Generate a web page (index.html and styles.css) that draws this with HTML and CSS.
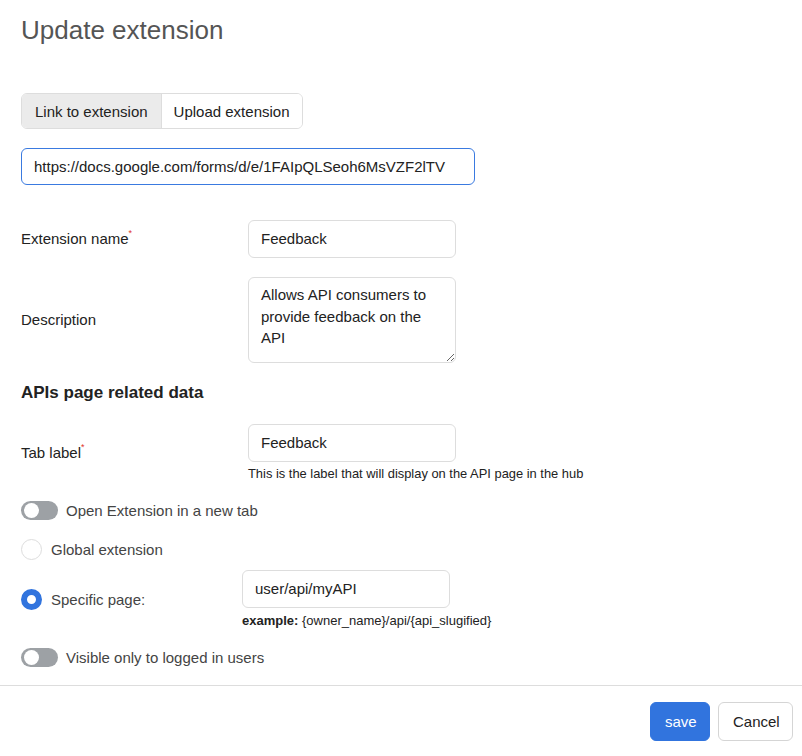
FILE: index.html
```html
<!DOCTYPE html>
<html lang="en">
<head>
    <meta charset="UTF-8">
    <meta name="viewport" content="width=device-width, initial-scale=1.0">
    <title>Update extension</title>
    <link rel="stylesheet" href="styles.css">
</head>
<body>
    <div class="modal">
        <div class="modal-body">
            <h1 class="modal-title">Update extension</h1>

            <div class="tabs">
                <button class="tab active">Link to extension</button>
                <button class="tab">Upload extension</button>
            </div>

            <input class="url-input" type="text" value="https://docs.google.com/forms/d/e/1FAIpQLSeoh6MsVZF2lTV">

            <div class="field-row first">
                <label class="field-label">Extension name<sup class="req">*</sup></label>
                <input class="text-input" type="text" value="Feedback">
            </div>

            <div class="field-row">
                <label class="field-label">Description</label>
                <textarea class="text-area">Allows API consumers to provide feedback on the API</textarea>
            </div>

            <h3 class="section-title">APIs page related data</h3>

            <div class="field-row tab-row">
                <label class="field-label">Tab label<sup class="req">*</sup></label>
                <div>
                    <input class="text-input" type="text" value="Feedback">
                    <div class="help-text">This is the label that will display on the API page in the hub</div>
                </div>
            </div>

            <div class="switch-row">
                <span class="switch"><span class="knob"></span></span>
                <span>Open Extension in a new tab</span>
            </div>

            <div class="radio-row">
                <span class="radio"></span>
                <span>Global extension</span>
            </div>

            <div class="radio-field">
                <div class="radio-row inline">
                    <span class="radio checked"></span>
                    <span>Specific page:</span>
                </div>
                <div>
                    <input class="text-input" type="text" value="user/api/myAPI">
                    <div class="example-text"><b>example:</b> {owner_name}/api/{api_slugified}</div>
                </div>
            </div>

            <div class="switch-row last">
                <span class="switch"><span class="knob"></span></span>
                <span>Visible only to logged in users</span>
            </div>
        </div>

        <div class="modal-footer">
            <button class="btn btn-primary">save</button>
            <button class="btn btn-default">Cancel</button>
        </div>
    </div>
</body>
</html>
```

FILE: styles.css
```css
* {
    margin: 0;
    padding: 0;
    box-sizing: border-box;
}

body {
    font-family: "Liberation Sans", Arial, Helvetica, sans-serif;
    font-size: 15px;
    color: #222;
    background: #fff;
}

.modal-body {
    padding: 15px 21px 18px;
}

.modal-title {
    font-size: 26px;
    font-weight: normal;
    line-height: 30px;
    color: #555;
}

.tabs {
    display: inline-flex;
    margin-top: 48px;
    border: 1px solid #ddd;
    border-radius: 6px;
    overflow: hidden;
}

.tab {
    height: 34px;
    padding: 0 12px;
    font-family: inherit;
    font-size: 15px;
    color: #222;
    background: #fff;
    border: none;
    white-space: nowrap;
    cursor: pointer;
}

.tab.active {
    padding: 0 13px;
    background: #ebebeb;
    border-right: 1px solid #ddd;
}

.url-input {
    display: block;
    width: 454px;
    height: 37px;
    margin-top: 19px;
    padding: 0 12px;
    font-family: inherit;
    font-size: 15px;
    color: #222;
    border: 1px solid #3a7ae0;
    border-radius: 6px;
    outline: none;
}

.field-row {
    display: grid;
    grid-template-columns: 227px 208px;
    align-items: center;
    margin-top: 19px;
}

.field-row.first {
    margin-top: 35px;
}

.field-row.tab-row {
    margin-top: 21px;
}

.field-label {
    font-size: 15px;
    position: relative;
    top: -1px;
}

.req {
    color: #e0342c;
    font-size: 9px;
    vertical-align: top;
    position: relative;
    top: -2px;
}

.text-input {
    display: block;
    width: 208px;
    height: 38px;
    padding: 0 12px 1px;
    font-family: inherit;
    font-size: 15px;
    color: #222;
    border: 1px solid #ddd;
    border-radius: 6px;
    outline: none;
}

.text-area {
    display: block;
    width: 208px;
    height: 86px;
    padding: 6px 12px;
    font-family: inherit;
    font-size: 15px;
    line-height: 21.5px;
    color: #222;
    border: 1px solid #ddd;
    border-radius: 6px;
    outline: none;
    resize: vertical;
}

.section-title {
    margin-top: 20px;
    font-size: 17px;
    line-height: 20px;
    font-weight: bold;
    color: #222;
}

.help-text {
    margin-top: 4px;
    font-size: 12.9px;
    line-height: 16px;
    white-space: nowrap;
}

.switch-row {
    display: flex;
    align-items: center;
    gap: 8px;
    margin-top: 19px;
    color: #444;
}

.switch {
    position: relative;
    width: 37px;
    height: 19px;
    border-radius: 10px;
    background: #9da1a5;
}

.knob {
    position: absolute;
    left: 3px;
    top: 2px;
    width: 15px;
    height: 15px;
    border-radius: 50%;
    background: #fff;
}

.radio-row {
    display: flex;
    align-items: center;
    gap: 9px;
    margin-top: 19px;
    color: #444;
}

.radio-row.inline {
    margin-top: 0;
}

.radio {
    width: 21px;
    height: 21px;
    border: 1px solid #ddd;
    border-radius: 50%;
    background: #fff;
}

.radio.checked {
    border: 6px solid #3174de;
    background: #fff;
}

.radio-field {
    display: grid;
    grid-template-columns: 221px 208px;
    align-items: center;
    margin-top: 10px;
}

.example-text {
    margin-top: 5px;
    font-size: 13px;
    line-height: 16px;
    color: #222;
    white-space: nowrap;
}

.modal-footer {
    display: flex;
    justify-content: flex-end;
    gap: 8px;
    border-top: 1px solid #ddd;
    padding: 16px 9px 15px;
}

.btn {
    height: 39px;
    padding: 0 14px;
    font-family: inherit;
    font-size: 15px;
    border-radius: 6px;
    cursor: pointer;
}

.btn-primary {
    width: 60px;
    background: #3174de;
    color: #fff;
    border: 1px solid #3174de;
}

.btn-default {
    width: 75px;
    background: #fff;
    color: #222;
    border: 1px solid #d5d5d5;
}
```
